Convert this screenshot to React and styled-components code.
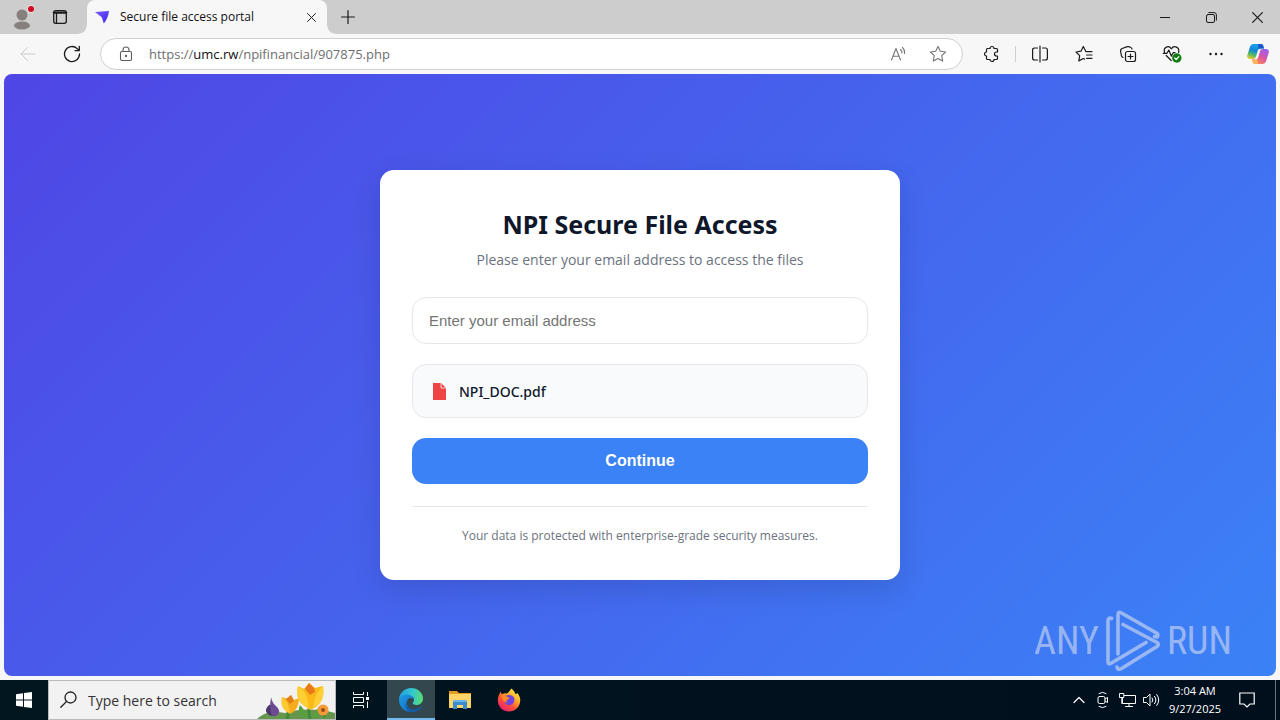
import React from 'react';
import styled, { createGlobalStyle, css } from 'styled-components';

const ui = `'Open Sans', 'Noto Sans', sans-serif`;
const noto = `'Noto Sans', 'Open Sans', sans-serif`;
const arial = `'Liberation Sans', Arial, sans-serif`;

const GlobalStyle = createGlobalStyle`
  *, *::before, *::after { box-sizing: border-box; }
  body { margin: 0; font-family: ${ui}; background: #f7f7f7; color: #1b1b1b; }
  button { border: 0; padding: 0; background: none; color: inherit; font: inherit; cursor: pointer; }
  svg { display: block; flex: none; }
`;

const Screen = styled.div`
  min-height: 100vh;
  display: flex;
  flex-direction: column;
`;

/* Browser window */
const TitleBar = styled.header`
  height: 34px;
  display: flex;
  align-items: stretch;
  background: #cdcdcd;
`;

const LeadingTools = styled.div`
  display: flex;
  margin-right: 11px;
`;

const IconButton = styled.button`
  width: ${(p) => p.$w || 44}px;
  display: flex;
  align-items: center;
  justify-content: center;
  color: ${(p) => p.$color || '#1b1b1b'};
`;

const Tab = styled.div`
  position: relative;
  width: 240px;
  display: flex;
  align-items: center;
  padding: 0 8px;
  border-radius: 8px 8px 0 0;
  background: #f7f7f7;
  font-size: 12px;
  line-height: 16px;
  color: #111;

  &::before,
  &::after {
    content: '';
    position: absolute;
    bottom: 0;
    width: 8px;
    height: 8px;
  }
  &::before {
    left: -8px;
    background: radial-gradient(circle at 0 0, transparent 7px, #f7f7f7 8px);
  }
  &::after {
    right: -8px;
    background: radial-gradient(circle at 100% 0, transparent 7px, #f7f7f7 8px);
  }
`;

const TabTitle = styled.span`
  flex: 1;
  margin-left: 9px;
  white-space: nowrap;
`;

const WindowControls = styled.div`
  display: flex;
  margin-left: auto;
`;

const Toolbar = styled.nav`
  height: 40px;
  display: flex;
  align-items: stretch;
  padding: 0 2px 0 6px;
`;

const AddressBar = styled.div`
  flex: 1;
  display: flex;
  align-items: center;
  height: 32px;
  margin: 4px 6px;
  padding: 0 4px 0 17px;
  border: 1px solid #d0d0d0;
  border-radius: 16px;
  background: #fff;
`;

const Url = styled.div`
  flex: 1;
  margin-left: 15px;
  font-size: 13px;
  line-height: 20px;
  color: #6e6e6e;
  white-space: nowrap;
  outline: none;

  b { font-weight: 400; color: #111; }
`;

const Divider = styled.span`
  width: 1px;
  height: 16px;
  margin: 0 2px;
  align-self: center;
  background: #cfcfcf;
`;

/* Web page */
const Page = styled.main`
  position: relative;
  flex: 1;
  display: flex;
  align-items: center;
  justify-content: center;
  margin: 0 4px 4px;
  padding: 24px;
  border-radius: 8px;
  background: linear-gradient(135deg, #4f46e5, #3b82f6);
`;

const Card = styled.form`
  width: 100%;
  max-width: 520px;
  padding: 36px 32px 32px;
  border-radius: 14px;
  background: #fff;
  box-shadow: 0 10px 30px rgba(0, 0, 0, 0.12);
  text-align: center;
`;

const Heading = styled.h1`
  margin: 0 0 5px;
  font-family: ${noto};
  font-size: 25px;
  font-weight: 700;
  line-height: 36px;
  color: #0f172a;
`;

const Lead = styled.p`
  margin: 0 0 25px;
  font-size: 14px;
  line-height: 25px;
  color: #6b7280;
`;

const EmailInput = styled.input`
  display: block;
  width: 100%;
  height: 47px;
  padding: 0 16px;
  border: 1px solid #e5e7eb;
  border-radius: 14px;
  background: #fff;
  font-family: ${arial};
  font-size: 15px;
  color: #0f172a;

  &::placeholder { color: #757575; opacity: 1; }
`;

const FileRow = styled.div`
  display: flex;
  align-items: center;
  gap: 10px;
  height: 54px;
  margin: 20px 0;
  padding: 0 16px;
  border: 1px solid #e5e7eb;
  border-radius: 14px;
  background: #f8fafc;
  font-family: ${noto};
  font-size: 14px;
  font-weight: 500;
  color: #0f172a;
`;

const ContinueButton = styled.button`
  width: 100%;
  height: 46px;
  border-radius: 14px;
  background: #3b82f6;
  color: #fff;
  font-family: ${arial};
  font-size: 16px;
  font-weight: 700;
`;

const Note = styled.p`
  margin: 22px 0 0;
  padding-top: 16px;
  border-top: 1px solid #e5e7eb;
  font-size: 12px;
  line-height: 25px;
  color: #6b7280;
`;

const Watermark = styled.div`
  position: absolute;
  right: 44px;
  bottom: 4px;
  display: flex;
  align-items: center;
  gap: 6px;
  font-family: 'Roboto Condensed', Roboto, sans-serif;
  font-size: 38px;
  font-weight: 400;
  line-height: 62px;
  color: rgba(205, 215, 240, 0.65);
`;

/* Desktop taskbar */
const Taskbar = styled.footer`
  height: 40px;
  display: flex;
  align-items: stretch;
  background: linear-gradient(90deg, #01161f, #010f1d);
  color: #fff;
`;

const SearchBox = styled.label`
  width: 288px;
  display: flex;
  align-items: center;
  padding-left: 11px;
  border: 1px solid #b8babc;
  background: #f2f2f2;
  color: #222;
  overflow: hidden;
`;

const SearchInput = styled.input`
  flex: 1;
  min-width: 0;
  margin-left: 10px;
  padding: 0;
  border: 0;
  outline: 0;
  background: transparent;
  font-family: ${ui};
  font-size: 14px;

  &::placeholder { color: #333; opacity: 1; }
`;

const TaskButton = styled(IconButton)`
  width: 49px;
  color: #fff;
  ${(p) =>
    p.$active &&
    css`
      background: #33474f;
      border-bottom: 2px solid #76b9ed;
      padding-top: 2px;
      width: 48px;
      margin-left: 2px;
    `}
`;

const Tray = styled.div`
  display: flex;
  margin-left: auto;
`;

const Clock = styled.time`
  width: 64px;
  display: flex;
  flex-direction: column;
  align-items: center;
  justify-content: center;
  font-size: 11px;
  line-height: 18px;
  white-space: nowrap;
`;

const ShowDesktop = styled.button`
  width: 5px;
  margin-left: 8px;
  border-left: 1px solid #6a737c;
`;

function Icon({ w = 20, h, sw = 1, vb, children, ...rest }) {
  const hh = h || w;
  return (
    <svg
      width={w}
      height={hh}
      viewBox={vb || `0 0 ${w} ${hh}`}
      fill="none"
      stroke="currentColor"
      strokeWidth={sw}
      strokeLinecap="round"
      strokeLinejoin="round"
      aria-hidden="true"
      {...rest}
    >
      {children}
    </svg>
  );
}

const STAR = 'M10 2.4l2.3 4.9 5.3.7-3.9 3.7 1 5.4-4.7-2.6-4.7 2.6 1-5.4L2.4 8l5.3-.7z';

const Avatar = () => (
  <Icon w={24} h={28} stroke="none">
    <circle cx="12" cy="12" r="5.500" fill="#85807d" />
    <ellipse cx="12" cy="22.500" rx="8" ry="4" fill="#85807d" />
    <circle cx="21" cy="6" r="4" fill="#e2dede" />
    <circle cx="21" cy="6" r="3" fill="#d20a20" />
  </Icon>
);

const TabActions = () => (
  <Icon w={16} sw={1.3}>
    <rect x="1.7" y="1.7" width="12.6" height="12.6" rx="2" />
    <path d="M2 3.600h12" strokeWidth="2.400" />
    <path d="M4.500 4v10" />
  </Icon>
);

const Favicon = () => (
  <Icon w={16} stroke="none">
    <defs>
      <linearGradient id="fav" x1="0" y1="0" x2="1" y2="1">
        <stop offset="0" stopColor="#7a5cff" />
        <stop offset="1" stopColor="#3a25e8" />
      </linearGradient>
    </defs>
    <path d="M0 3L14 2Q13 9.500 8.800 14.500L6.800 8.200z" fill="url(#fav)" />
  </Icon>
);

const Cross = ({ w }) => (
  <Icon w={w} vb="0 0 10 10" sw={1.1}>
    <path d="M.6.6l8.800 8.800M9.400.6L.6 9.400" />
  </Icon>
);

const Copilot = () => (
  <Icon w={22} h={20} vb="0 0 22 20" stroke="none">
    <defs>
      <linearGradient id="cpA" x1="0.6" y1="0" x2="0.2" y2="1">
        <stop offset="0" stopColor="#18a4ee" />
        <stop offset=".45" stopColor="#1688d4" />
        <stop offset=".7" stopColor="#4cb86a" />
        <stop offset="1" stopColor="#efc92c" />
      </linearGradient>
      <linearGradient id="cpB" x1="0.8" y1="0" x2="0.2" y2="1">
        <stop offset="0" stopColor="#9a5ff0" />
        <stop offset=".5" stopColor="#dc55a2" />
        <stop offset="1" stopColor="#ff8f4d" />
      </linearGradient>
    </defs>
    <path d="M6.6 0h7.2c1.5 0 2.1.8 2.5 2L17 4.5h-3.3c-1.6 0-2.4.8-2.9 2.3L9 12.6c-.5 1.6-1.2 2.4-3 2.4H3C.8 15-.3 13.4.3 11.2L2.9 3C3.5 1.1 4.7 0 6.6 0z" fill="url(#cpA)" />
    <path d="M15.4 20H8.2c-1.5 0-2.1-.8-2.500-2L5 15.500h3.300c1.600 0 2.400-.8 2.900-2.300L13 7.400C13.500 5.800 14.200 5 16 5h3c2.200 0 3.300 1.600 2.700 3.800L19.100 17c-.6 1.900-1.800 3-3.700 3z" fill="url(#cpB)" />
    <path d="M11 0h2.800c1.500 0 2.100.8 2.500 2L17 4.500h-3.300c-.9 0-1.500.2-2 .8z" fill="#1d55cf" />
    <path d="M11 20H8.200c-1.500 0-2.100-.8-2.500-2L5 15.500h3.300c.9 0 1.500-.2 2-.8z" fill="#ffb35a" />
  </Icon>
);

const PlayMark = () => (
  <svg width="56" height="62" viewBox="0 0 56 62" fill="none" stroke="currentColor" strokeWidth="3.6" strokeLinecap="round" strokeLinejoin="round" aria-hidden="true">
    <path d="M6.500 8.500Q3 7 3 11V51.500Q3 55 6 53.200L41 32.500M13 44V5Q13 1 16 2.800L51.500 23Q54 25 52 27L49.500 26.500M18 14.500L52 32.500Q54.500 34.500 52 36.500L16.500 58.500Q12.500 60.500 12 57" />
  </svg>
);

const Flowers = () => (
  <svg width="78" height="38" viewBox="0 0 78 38" aria-hidden="true">
    <path d="M0 38C8 30 18 30 28 32C44 27 64 28 78 32V38z" fill="#66964e" />
    <path d="M53 38Q51 30 53 20M30 38Q33 30 31 24M68 36l-6-9" fill="none" stroke="#3f8b36" strokeWidth="3" />
    <path d="M45 36Q40 29 43 24Q49 30 50 37zM55 37Q57 29 64 25Q64 33 59 37z" fill="#57a13d" />
    <path d="M14 16Q15 22 20 26Q25 32 19 35Q11 36 9 30Q9 26 14 23z" fill="#6d4b91" />
    <path d="M14 17Q12 28 15 35Q9 33 9 29Q10 25 14 23z" fill="#493768" />
    <path d="M25 16L31 18L34 14L37 19L42 17Q42 29 33 33Q23 28 25 16z" fill="#f5ad1c" />
    <path d="M25 16Q31 19 33 32Q22 28 25 16z" fill="#ffc931" />
    <path d="M29 18l5-4 3 6-4 3z" fill="#e27e18" />
    <path d="M41 5L47 8L52 2L58 7L66 5Q68 20 59 26L53 29L46 24Q38 18 41 5z" fill="#f9b918" />
    <path d="M41 5Q51 11 52 28L45 23Q38 16 41 5zM66 5Q58 11 56 27Q69 21 66 5z" fill="#ffd036" />
    <path d="M48 8l4-6 5 5 1 4-5 3z" fill="#e87918" />
    <circle cx="66" cy="29" r="5.500" fill="#f69a35" />
    <circle cx="66" cy="29" r="2" fill="#9b4a1b" />
  </svg>
);

const Edge = () => (
  <svg width="26" height="26" viewBox="0 0 26 26" aria-hidden="true">
    <defs>
      <linearGradient id="edA" x1="0" y1="0.3" x2="1" y2="0.4">
        <stop offset="0" stopColor="#249ee3" />
        <stop offset=".55" stopColor="#34c7cf" />
        <stop offset="1" stopColor="#59dc72" />
      </linearGradient>
      <linearGradient id="edB" x1="0" y1="0" x2="1" y2="1">
        <stop offset="0" stopColor="#1e9de5" />
        <stop offset="1" stopColor="#1166b8" />
      </linearGradient>
    </defs>
    <path d="M1 13C1 6 6.500 1 13 1C20 1 25 6 25 11.500C25 15.500 22 18 18.500 18C16 18 14.700 17.200 14.700 16.300C14.700 15.600 16 15 16 12.800C16 10 13.500 8.500 10 8.500C5 8.500 1.500 11 1 13z" fill="url(#edA)" />
    <path d="M1 13C1.300 9.700 4.600 7.600 8.300 7.600C12.500 7.600 16 9.800 16 12.800C15.300 11.400 13.600 10.700 12.200 11C9.700 11.600 8.500 14 9 17C9.700 21.500 14 24 18 24C16.500 24.700 14.800 25 13 25C6.500 25 1 20 1 13z" fill="url(#edB)" />
    <path d="M9.500 12.900C8 15 8.400 19.500 12 21.500C15.500 23.300 20 22.300 23.300 19.200C24 18.800 24.200 19.300 23.900 19.800C21.500 23.500 17.500 25.200 14 25C8 24.500 5.800 17.500 9.500 12.900z" fill="#155da8" />
  </svg>
);

const Explorer = () => (
  <svg width="22" height="20" viewBox="0 0 22 20" aria-hidden="true">
    <path d="M0 1h8l2 2h12v5H0z" fill="#e29c24" />
    <path d="M0 4h22v14H0z" fill="#ffd568" />
    <path d="M4 19v-7q0-2 2-2h10q2 0 2 2v7h-4v-4H8v4z" fill="#3b8bd0" />
    <path d="M4 12q0-2 2-2h10q2 0 2 2z" fill="#6bb4e8" />
  </svg>
);

const Firefox = () => (
  <svg width="24" height="24" viewBox="0 0 24 24" aria-hidden="true">
    <defs>
      <linearGradient id="ffA" x1="0.85" y1="0.05" x2="0.2" y2="0.95">
        <stop offset="0" stopColor="#fff047" />
        <stop offset=".35" stopColor="#ffab2b" />
        <stop offset=".65" stopColor="#ff5039" />
        <stop offset="1" stopColor="#e71e72" />
      </linearGradient>
    </defs>
    <path d="M14.3.5C17 2.500 18 4.500 18.300 6C19.500 6.300 20 5.500 19.800 4.500C22.200 7 23.500 10 23.200 13C22.800 19 18 23.500 12 23.500C5.700 23.500.8 18.700.8 12.500C.8 9 2 6 4 3.500C4 4.700 4.300 5.500 5 6.200C6.500 5.300 8 5 9.300 5.400C10.700 5.300 12 4 14.300.5z" fill="url(#ffA)" />
    <path d="M9 7.800C11 6.500 15 6.600 16.800 9.300C18.300 12 17 16 13.500 17C10 17.800 7 15.500 7 12.500C8.300 13.200 9.600 13 11.300 11.800C10 11.300 8.500 9.500 9 7.800z" fill="#7143dc" />
    <path d="M4.500 7.500C6.500 6 8.500 7 9.500 8.500C10.500 9.300 12 9.200 12.500 9.700C12 11.300 10.500 11.200 9.500 12C8.700 12.800 9.500 14 11 14.400C8.500 15 6 13.500 5.500 11z" fill="#ff8a24" />
  </svg>
);

const PdfFile = () => (
  <svg width="20" height="20" viewBox="0 0 20 20" aria-hidden="true">
    <path d="M4 2h8l5 5v12H4z" fill="#ef4444" />
    <path d="M12 2v5h5" fill="none" stroke="#fbd5d5" strokeWidth="1" />
  </svg>
);

export default function App() {
  return (
    <Screen>
      <GlobalStyle />
      <TitleBar>
        <LeadingTools>
          <IconButton aria-label="Profile"><Avatar /></IconButton>
          <IconButton $w={32} aria-label="Tab actions"><TabActions /></IconButton>
        </LeadingTools>
        <Tab>
          <Favicon />
          <TabTitle>Secure file access portal</TabTitle>
          <IconButton $w={16} aria-label="Close tab"><Cross w={9} /></IconButton>
        </Tab>
        <IconButton $w={42} aria-label="New tab">
          <Icon w={14} sw={1.2}><path d="M7 .6v12.800M.6 7h12.800" /></Icon>
        </IconButton>
        <WindowControls>
          <IconButton $w={46} aria-label="Minimize">
            <Icon w={10}><path d="M0 5.500h10" /></Icon>
          </IconButton>
          <IconButton $w={46} aria-label="Restore">
            <Icon w={11}>
              <rect x=".5" y="2.500" width="8" height="8" rx="1.500" />
              <path d="M2.800.6H8Q10.400.6 10.400 3v5.200" />
            </Icon>
          </IconButton>
          <IconButton $w={46} aria-label="Close"><Cross w={11} /></IconButton>
        </WindowControls>
      </TitleBar>

      <Toolbar>
        <IconButton $color="#c9c9c9" aria-label="Back">
          <Icon w={16}><path d="M15 8H1M7.500 1.500L1 8l6.500 6.500" /></Icon>
        </IconButton>
        <IconButton aria-label="Refresh">
          <Icon w={18} sw={1.3}><path d="M16.500 9a7.500 7.500 0 1 1-2.300-5.400L16.200 5.500M16.300 1.300v4.300H12" /></Icon>
        </IconButton>
        <AddressBar>
          <Icon w={16} color="#5c5c5c" sw={1.1}>
            <rect x="2.500" y="5.500" width="11" height="9" rx="1.500" />
            <path d="M5 5.500V4a3 3 0 0 1 6 0v1.500" />
            <circle cx="8" cy="10" r=".6" fill="currentColor" />
          </Icon>
          <Url role="textbox" aria-label="Address" tabIndex={0}>
            https://<b>umc.rw</b>/npifinancial/907875.php
          </Url>
          <IconButton $w={40} $color="#767676" aria-label="Read aloud">
            <Icon w={18} sw={1.1}>
              <path d="M2.500 15L7 3.500l4.500 11.500M4 11.200h6M11.500 4.500q1.600 1.500 1.500 3.500M13.500 2.500q2.500 2.400 2.200 6" />
            </Icon>
          </IconButton>
          <IconButton $w={40} $color="#767676" aria-label="Add to favorites">
            <Icon w={20} sw={1.1}><path d={STAR} /></Icon>
          </IconButton>
        </AddressBar>
        <IconButton aria-label="Extensions">
          <Icon w={18} sw={1.2}>
            <path d="M5.500 3.500H8a2 2 0 0 1 4 0h2.500q1 0 1 1V7h-1a2 2 0 0 0 0 4h1v2.500q0 1-1 1H12a2 2 0 0 1-4 0H5.500q-1 0-1-1V11a2 2 0 0 1 0-4V4.500q0-1 1-1z" />
          </Icon>
        </IconButton>
        <Divider />
        <IconButton aria-label="Split screen">
          <Icon w={18} sw={1.2}>
            <path d="M6.500 3H3.600Q1.600 3 1.600 5v8q0 2 2 2h2.900M11.500 3h2.900q2 0 2 2v8q0 2-2 2h-2.900M9 1v16" />
          </Icon>
        </IconButton>
        <IconButton aria-label="Favorites">
          <Icon w={20} sw={1.2}>
            <path d="M12 7.700L9.300 2.500 7 7.200 2 8l3.700 3.700-.9 5.200 4.500-2.400 1.200.6M12 7.700h6M12.500 11h5.500M12.500 14.300h5.500" />
          </Icon>
        </IconButton>
        <IconButton aria-label="Collections">
          <Icon w={18} sw={1.2}>
            <rect x="6.500" y="6.500" width="10" height="10" rx="2" />
            <path d="M11.500 9v5M9 11.500h5M4 12.500Q2.800 12 2.500 10.800L1.600 6.500Q1.200 4.300 3.200 3.500L7.500 1.900Q9 1.400 10.500 1.900l1 .3q1.300.5 1.500 1.800" />
          </Icon>
        </IconButton>
        <IconButton aria-label="Browser essentials">
          <Icon w={20} sw={1.2}>
            <path d="M2.500 8.500C1 3 6.800.8 9.300 4.800 12 .8 18 3 16.600 8.500M4.200 11.500l5 5M1.200 9.300H5l1.800-3.200 2.500 6 1.900-3.400H13" />
            <circle cx="14.800" cy="14" r="4.700" fill="#107c10" stroke="none" />
            <path d="M12.700 14l1.500 1.500 2.700-2.800" stroke="#fff" />
          </Icon>
        </IconButton>
        <IconButton aria-label="Settings and more">
          <Icon w={16} stroke="none" fill="currentColor">
            <circle cx="2.500" cy="8" r="1.200" /><circle cx="8" cy="8" r="1.200" /><circle cx="13.500" cy="8" r="1.200" />
          </Icon>
        </IconButton>
        <IconButton $w={40} aria-label="Copilot"><Copilot /></IconButton>
      </Toolbar>

      <Page>
        <Card onSubmit={(e) => e.preventDefault()}>
          <Heading>NPI Secure File Access</Heading>
          <Lead>Please enter your email address to access the files</Lead>
          <EmailInput type="email" aria-label="Email address" placeholder="Enter your email address" />
          <FileRow><PdfFile />NPI_DOC.pdf</FileRow>
          <ContinueButton type="submit">Continue</ContinueButton>
          <Note>Your data is protected with enterprise-grade security measures.</Note>
        </Card>
        <Watermark>
          <span>ANY</span>
          <PlayMark />
          <span>RUN</span>
        </Watermark>
      </Page>

      <Taskbar>
        <IconButton $w={48} $color="#fff" aria-label="Start">
          <Icon w={16} stroke="none" fill="currentColor">
            <path d="M0 2.300L7 1.300V7.500H0zM8 1.100L16 0V7.500H8zM0 8.500h7v6.200l-7-1zM8 8.500h8V16l-8-1.100z" />
          </Icon>
        </IconButton>
        <SearchBox>
          <Icon w={18} sw={1.3}>
            <circle cx="10.500" cy="6.500" r="5.500" /><path d="M6.500 10.500L.8 16.200" />
          </Icon>
          <SearchInput type="text" aria-label="Search" placeholder="Type here to search" />
          <Flowers />
        </SearchBox>
        <TaskButton aria-label="Task view">
          <Icon w={18} strokeLinecap="butt" strokeLinejoin="miter">
            <path d="M1.500 1v2.500h10V1M1.500 17v-2.500h10V17M1.500 6.500h10v5h-10zM15.500 1v4M15.500 10.500V17" />
            <rect x="14.500" y="6.500" width="2" height="2" fill="currentColor" />
          </Icon>
        </TaskButton>
        <TaskButton $active aria-label="Microsoft Edge"><Edge /></TaskButton>
        <TaskButton aria-label="File Explorer"><Explorer /></TaskButton>
        <TaskButton aria-label="Firefox"><Firefox /></TaskButton>
        <Tray>
          <IconButton $w={24} $color="#fff" aria-label="Show hidden icons">
            <Icon w={12} sw={1.2}><path d="M1 8.500L6 3.500l5 5" /></Icon>
          </IconButton>
          <IconButton $w={24} $color="#fff" aria-label="Meet now">
            <Icon w={14} h={18}>
              <rect x="2" y="5.500" width="7" height="7" rx="1.500" />
              <path d="M9 8l2.500-1.500v5L9 10M3 2.500Q6.500 0 10 2.500M3 15.500Q6.500 18 10 15.500" />
            </Icon>
          </IconButton>
          <IconButton $w={24} $color="#fff" aria-label="Network">
            <Icon w={17} h={16} strokeLinejoin="miter">
              <path d="M5.500 3.500h11v8h-13V6.500M10 11.500v3M6.500 14.500h7M.8 1.500h4v4h-4zM2.800 5.500v6" />
            </Icon>
          </IconButton>
          <IconButton $w={24} $color="#fff" aria-label="Volume">
            <Icon w={17} h={16}>
              <path d="M.8 5.500h2.700L7 2v12L3.500 10.500H.8zM9.200 6q1.500 2 0 4M11.500 4.300q3 3.700 0 7.400M13.700 2.500q4.300 5.500 0 11" />
            </Icon>
          </IconButton>
          <Clock><span>3:04 AM</span><span>9/27/2025</span></Clock>
          <IconButton $w={40} $color="#fff" aria-label="Notifications">
            <Icon w={16} sw={1.2} strokeLinejoin="miter">
              <path d="M.8 1h14.400v11H11l-3 3-3-3H.8z" />
            </Icon>
          </IconButton>
          <ShowDesktop aria-label="Show desktop" />
        </Tray>
      </Taskbar>
    </Screen>
  );
}
